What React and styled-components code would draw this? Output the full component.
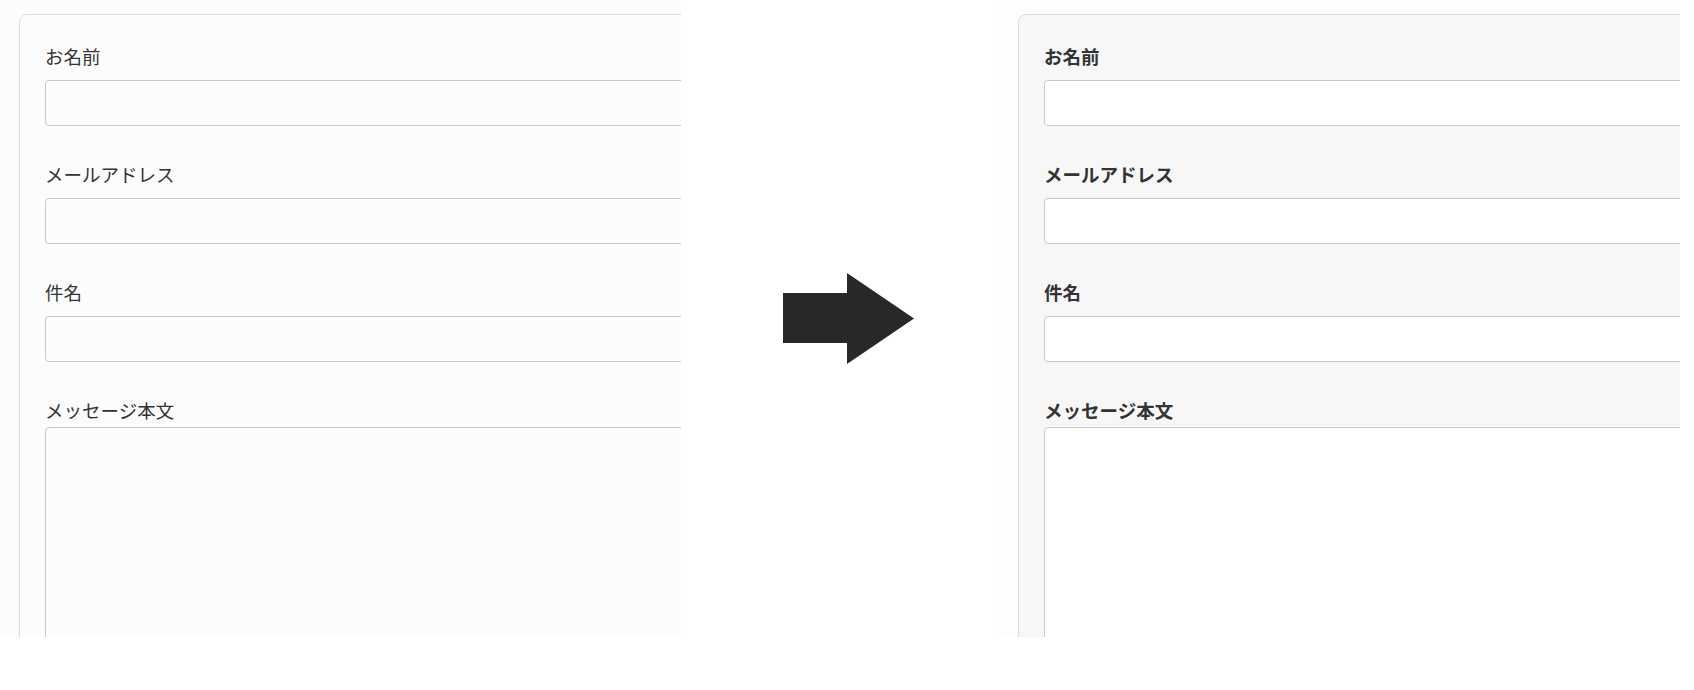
import React from "react";
import styled, { createGlobalStyle } from "styled-components";

const GlobalStyle = createGlobalStyle`
  html, body {
    margin: 0;
    padding: 0;
    background: #fff;
  }
  body {
    font-family: "Noto Sans CJK JP", "Noto Sans", sans-serif;
  }
`;

const Page = styled.div`
  display: grid;
  grid-template-columns: 681px 317px 682px;
  height: 690px;
  align-items: start;
`;

const Shot = styled.div`
  height: 637px;
  overflow: hidden;
  background: ${(props) => props.$bg || "#fcfcfc"};
  padding: 14px 0 0 ${(props) => props.$left || 19}px;
  box-sizing: border-box;
`;

const Card = styled.div`
  width: 1000px;
  min-height: 700px;
  box-sizing: border-box;
  border: 1px solid #dcdcdc;
  border-radius: 8px;
  background: ${(props) => (props.$after ? "#f7f7f7" : "#fcfcfc")};
  padding: 28px 25px 0;
`;

const Field = styled.div`
  margin-bottom: 35px;
`;

const Label = styled.label`
  display: block;
  font-size: 18.5px;
  line-height: 27px;
  color: #333;
  font-weight: ${(props) => (props.$after ? 700 : 400)};
  margin-bottom: ${(props) => (props.$tight ? 3 : 10)}px;
`;

const Input = styled.input`
  display: block;
  width: 100%;
  height: 46px;
  box-sizing: border-box;
  border: 1px solid #c8c8c8;
  border-radius: 4px;
  background: ${(props) => (props.$after ? "#fff" : "#fcfcfc")};
  margin: 0;
`;

const TextArea = styled.textarea`
  display: block;
  width: 100%;
  height: 260px;
  box-sizing: border-box;
  border: 1px solid #c8c8c8;
  border-radius: 4px;
  background: ${(props) => (props.$after ? "#fff" : "#fcfcfc")};
  margin: 0;
  resize: none;
`;

const ArrowCell = styled.div`
  height: 637px;
  display: flex;
  align-items: center;
  padding-left: 102px;
`;

const fields = ["お名前", "メールアドレス", "件名"];

function ContactForm({ after }) {
  return (
    <Card $after={after}>
      {fields.map((name) => (
        <Field key={name}>
          <Label $after={after}>{name}</Label>
          <Input type="text" $after={after} />
        </Field>
      ))}
      <Field>
        <Label $after={after} $tight>
          メッセージ本文
        </Label>
        <TextArea $after={after} />
      </Field>
    </Card>
  );
}

function Arrow() {
  return (
    <svg width="131" height="91" viewBox="0 0 131 91">
      <rect x="0" y="20" width="65" height="50" fill="#282828" />
      <polygon points="64,0 131,45.5 64,91" fill="#282828" />
    </svg>
  );
}

export default function App() {
  return (
    <>
      <GlobalStyle />
      <Page>
        <Shot $left={19} $bg="#fcfcfc">
          <ContactForm />
        </Shot>
        <ArrowCell>
          <Arrow />
        </ArrowCell>
        <Shot $left={20} $bg="#fdfdfd">
          <ContactForm after />
        </Shot>
      </Page>
    </>
  );
}
